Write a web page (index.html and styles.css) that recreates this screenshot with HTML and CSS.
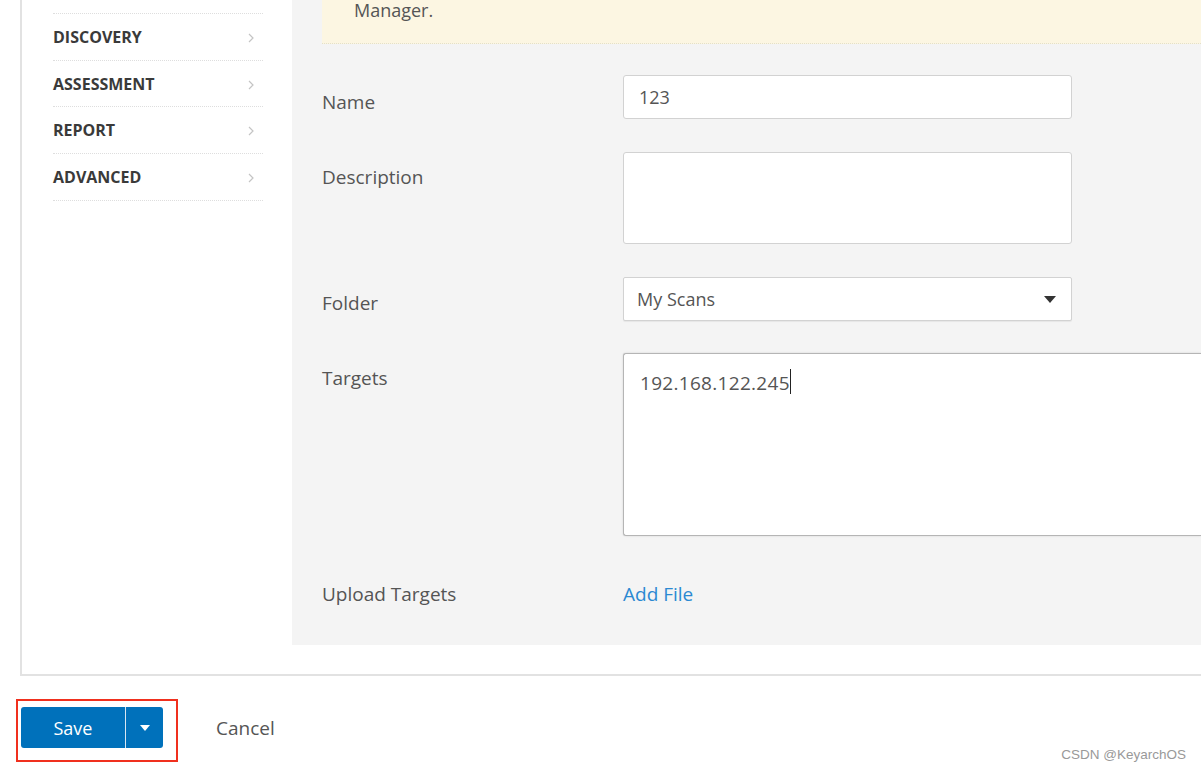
FILE: index.html
```html
<!DOCTYPE html>
<html>
<head>
<meta charset="utf-8">
<link rel="stylesheet" href="styles.css">
</head>
<body>
<div class="panel">
  <nav class="sidebar">
    <div class="nav-item"><span>DISCOVERY</span><svg class="chev" width="6" height="10" viewBox="0 0 6 10"><path d="M1 1 L5 5 L1 9" fill="none" stroke="#c4c4c4" stroke-width="1.2"/></svg></div>
    <div class="nav-item"><span>ASSESSMENT</span><svg class="chev" width="6" height="10" viewBox="0 0 6 10"><path d="M1 1 L5 5 L1 9" fill="none" stroke="#c4c4c4" stroke-width="1.2"/></svg></div>
    <div class="nav-item"><span>REPORT</span><svg class="chev" width="6" height="10" viewBox="0 0 6 10"><path d="M1 1 L5 5 L1 9" fill="none" stroke="#c4c4c4" stroke-width="1.2"/></svg></div>
    <div class="nav-item"><span>ADVANCED</span><svg class="chev" width="6" height="10" viewBox="0 0 6 10"><path d="M1 1 L5 5 L1 9" fill="none" stroke="#c4c4c4" stroke-width="1.2"/></svg></div>
  </nav>
  <main class="content">
    <div class="banner">Manager.</div>
    <div class="form">
      <div class="row row-name">
        <label class="label">Name</label>
        <div class="input">123</div>
      </div>
      <div class="row row-desc">
        <label class="label">Description</label>
        <div class="input textarea"></div>
      </div>
      <div class="row row-folder">
        <label class="label">Folder</label>
        <div class="input select"><span>My Scans</span><span class="caret"></span></div>
      </div>
      <div class="row row-targets">
        <label class="label">Targets</label>
        <div class="input targets"><span>192.168.122.245</span><span class="cursor"></span></div>
      </div>
      <div class="row row-upload">
        <label class="label">Upload Targets</label>
        <a class="link">Add File</a>
      </div>
    </div>
  </main>
</div>
<div class="actions">
  <div class="highlight">
    <div class="btn-group">
      <button class="btn-save">Save</button>
      <button class="btn-drop"><span class="caret-white"></span></button>
    </div>
  </div>
  <span class="cancel">Cancel</span>
</div>
<div class="watermark">CSDN @KeyarchOS</div>
</body>
</html>
```
FILE: styles.css
```css
html, body {
  margin: 0;
  padding: 0;
  background: #fff;
  width: 1201px;
  height: 772px;
  overflow: hidden;
  font-family: "Open Sans", "Noto Sans", sans-serif;
  position: relative;
}

.panel {
  margin-left: 20px;
  height: 674px;
  border-left: 2px solid #e2e2e2;
  border-bottom: 2px solid #e2e2e2;
  display: flex;
  align-items: flex-start;
}

.sidebar {
  width: 210px;
  padding: 13px 29px 0 31px;
  flex: none;
}

.nav-item {
  height: 45.7px;
  border-top: 1px dotted #dedede;
  display: flex;
  align-items: center;
  justify-content: space-between;
  padding-right: 9px;
  font-weight: 700;
  font-size: 16px;
  line-height: 20px;
  color: #3a3a3a;
}
.nav-item span { margin-top: 0; }
.nav-item .chev { margin-top: 2px; }
.nav-item:last-child {
  border-bottom: 1px dotted #dedede;
}

.content {
  flex: 1;
  height: 645px;
  background: #f4f4f4;
  padding-left: 30px;
}

.banner {
  height: 44px;
  background: #fcf6e2;
  border-bottom: 1px dotted #e4e0c8;
  padding-left: 32px;
  font-size: 18px;
  color: #555;
  line-height: 20px;
  box-sizing: border-box;
}

.form {
  display: flex;
  flex-direction: column;
}

.row {
  display: grid;
  grid-template-columns: 301px 1fr;
  align-items: start;
}

.label {
  font-size: 19px;
  color: #555;
  line-height: 24px;
  padding-top: 13px;
}

.input {
  box-sizing: border-box;
  width: 449px;
  background: #fff;
  border: 1px solid #d2d2d2;
  border-radius: 3px;
  font-size: 18px;
  color: #555;
  padding-left: 15px;
  display: flex;
  align-items: center;
}

.row-name { margin-top: 31px; }
.row-name .input { height: 44px; }
.row-name .label { padding-top: 15px; }

.row-desc { margin-top: 33px; }
.textarea { height: 92px; }

.row-folder { margin-top: 33px; }
.row-folder .label { padding-top: 14px; }
.select {
  height: 44px;
  border-radius: 2px;
  padding-left: 13px;
  padding-right: 15px;
  justify-content: space-between;
  box-shadow: 0 1px 1px rgba(0,0,0,0.06);
}
.caret {
  width: 0;
  height: 0;
  border-left: 6px solid transparent;
  border-right: 6px solid transparent;
  border-top: 7px solid #333;
}

.row-targets { margin-top: 32px; }
.targets {
  width: auto;
  height: 183px;
  border: 1px solid #b5b5b5;
  border-right: none;
  border-radius: 3px 0 0 3px;
  align-items: flex-start;
  padding-left: 16px;
  padding-top: 16px;
  font-size: 19px;
  letter-spacing: 0.3px;
  box-shadow: 0 0 2px rgba(0,0,0,0.15);
}
.cursor {
  display: inline-block;
  width: 1px;
  height: 25px;
  background: #222;
  margin-top: -1px;
}

.row-upload { margin-top: 34px; }
.row-upload .label { padding-top: 12px; }
.link {
  font-size: 19px;
  color: #2b89d2;
  line-height: 24px;
  padding-top: 12px;
}

.actions {
  display: flex;
  align-items: center;
  margin-top: 23px;
  margin-left: 16px;
}
.highlight {
  border: 2px solid #f0301e;
  padding: 6px 13px 12px 3px;
}
.btn-group {
  display: flex;
  height: 41px;
  border-radius: 3px;
  overflow: hidden;
}
.btn-save, .btn-drop {
  border: none;
  background: #0071bb;
  color: #fff;
  font-family: "Open Sans", "Noto Sans", sans-serif;
  font-size: 18px;
  padding: 0;
  margin: 0;
}
.btn-save {
  width: 105px;
  border-right: 1px solid #d8e6f2;
}
.btn-drop {
  width: 37px;
  display: flex;
  align-items: center;
  justify-content: center;
}
.caret-white {
  width: 0;
  height: 0;
  border-left: 5px solid transparent;
  border-right: 5px solid transparent;
  border-top: 6px solid #fff;
}
.cancel {
  margin-left: 38px;
  font-size: 19px;
  color: #555;
  margin-top: -6px;
}

.watermark {
  position: absolute;
  right: 15px;
  bottom: 10px;
  font-family: "Liberation Sans", Arial, sans-serif;
  font-size: 13.5px;
  color: #999;
}
```
